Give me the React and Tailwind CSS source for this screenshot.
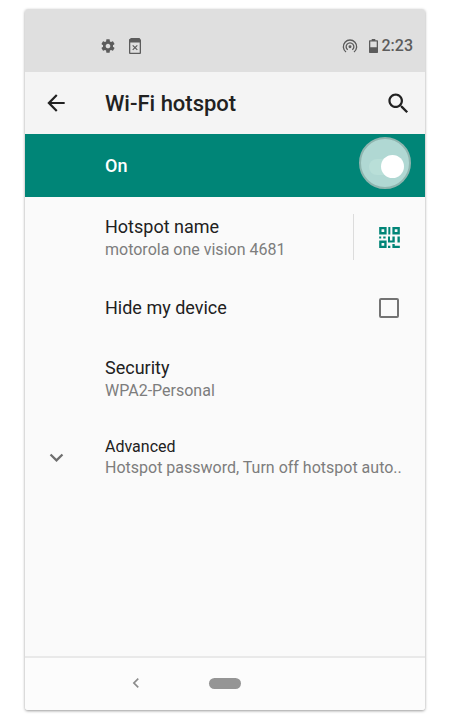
import { useState } from "react";

function MaterialIcon({ path, className }) {
  return (
    <svg viewBox="0 0 24 24" fill="currentColor" aria-hidden="true" className={className}>
      <path d={path} />
    </svg>
  );
}

const ICONS = {
  settings:
    "M19.43 12.98c.04-.32.07-.64.07-.98s-.03-.66-.07-.98l2.11-1.65c.19-.15.24-.42.12-.64l-2-3.46c-.12-.22-.39-.3-.61-.22l-2.49 1c-.52-.4-1.08-.73-1.69-.98l-.38-2.65C14.46 2.18 14.25 2 14 2h-4c-.25 0-.46.18-.49.42l-.38 2.65c-.61.25-1.17.59-1.69.98l-2.49-1c-.23-.09-.49 0-.61.22l-2 3.46c-.13.22-.07.49.12.64l2.11 1.65c-.04.32-.07.65-.07.98s.03.66.07.98l-2.11 1.65c-.19.15-.24.42-.12.64l2 3.46c.12.22.39.3.61.22l2.49-1c.52.4 1.08.73 1.69.98l.38 2.65c.03.24.24.42.49.42h4c.25 0 .46-.18.49-.42l.38-2.65c.61-.25 1.17-.59 1.69-.98l2.49 1c.23.09.49 0 .61-.22l2-3.46c.12-.22.07-.49-.12-.64l-2.11-1.65zM12 15.500c-1.930 0-3.500-1.570-3.500-3.500s1.570-3.500 3.500-3.500 3.500 1.570 3.500 3.500-1.570 3.500-3.500 3.500z",
  back: "M20 11H7.830l5.590-5.590L12 4l-8 8 8 8 1.410-1.410L7.830 13H20v-2z",
  search:
    "M15.500 14h-.79l-.28-.27C15.410 12.590 16 11.110 16 9.500 16 5.910 13.090 3 9.500 3S3 5.910 3 9.500 5.910 16 9.500 16c1.610 0 3.090-.59 4.230-1.570l.27.28v.79l5 4.990L20.490 19l-4.990-5zm-6 0C7.010 14 5 11.990 5 9.500S7.010 5 9.500 5 14 7.010 14 9.500 11.990 14 9.500 14z",
  expand: "M16.590 8.590L12 13.170 7.410 8.590 6 10l6 6 6-6z",
  chevronLeft: "M15.410 7.410L14 6l-6 6 6 6 1.410-1.410L10.830 12z",
};

function SimMissingIcon() {
  return (
    <svg viewBox="0 0 12 16" aria-hidden="true" className="h-4 w-3">
      <path
        fill="currentColor"
        fillRule="evenodd"
        d="M2 0h8.500L12 2v13a1 1 0 0 1-1 1H1a1 1 0 0 1-1-1V1.500zM1.300 4.600v10.100h9.400V4.600z"
      />
      <path d="M3.700 7.300l4.600 4.600M8.300 7.300l-4.600 4.600" stroke="currentColor" strokeWidth="1.200" />
    </svg>
  );
}

function HotspotIcon() {
  return (
    <svg viewBox="0 0 24 24" aria-hidden="true" className="h-4 w-4" fill="none" stroke="currentColor" strokeWidth="2">
      <circle cx="12" cy="13" r="2.200" fill="currentColor" stroke="none" />
      <path d="M8.600 17.700a5.800 5.800 0 1 1 6.800 0" />
      <path d="M6 21a10 10 0 1 1 12 0" />
    </svg>
  );
}

function BatteryIcon() {
  return (
    <svg viewBox="0 0 9 14" aria-hidden="true" className="h-[14px] w-[9px]">
      <path
        fill="currentColor"
        fillRule="evenodd"
        d="M2.700 0h3.600v1.200h2a.7.7 0 0 1 .7.7v11.400a.7.7 0 0 1-.7.7H.7a.7.7 0 0 1-.7-.7V1.900a.7.7 0 0 1 .7-.7h2zM1.300 2.600v5.600h6.400V2.600z"
      />
    </svg>
  );
}

function QrIcon() {
  return (
    <svg viewBox="0 0 61 62" fill="currentColor" aria-hidden="true" className="h-[21px] w-[21px]">
      <path
        fillRule="evenodd"
        d="M0 0h22v22H0zM7 7v8h8V7zM39 0h22v22H39zM46 7v8h8V7zM0 40h22v22H0zM7 47v8h8v-8z"
      />
      <path d="M27 0h6v22h-6zM0 28h6v6H0zM12 28h7v6h-7zM26 28h6v12h7v-12h7v18H26zM54 28h7v18h-7zM26 55h7v7h-7zM39 50h7v5h15v7H39z" />
    </svg>
  );
}

function SettingText({ title, detail }) {
  return (
    <span className="min-w-0 flex-1 text-left">
      <span className="block text-lg leading-6 text-[#212121]">{title}</span>
      <span className="block truncate text-base leading-[22px] text-[#7d7d7d]">{detail}</span>
    </span>
  );
}

export default function App() {
  const [on, setOn] = useState(true);
  const [hidden, setHidden] = useState(false);

  return (
    <div className="flex min-h-screen flex-col bg-white px-[25px] pt-[9px] pb-[10px] font-[Roboto,sans-serif]">
      <div className="flex flex-1 flex-col overflow-hidden rounded-[3px] bg-[#fafafa] shadow-[0_1px_3px_rgba(0,0,0,0.4)]">
        <div className="flex h-[63px] items-center justify-between bg-[#dfdfdf] pt-[10px] pr-3 pl-[75px] text-[#5c5c5c]">
          <div className="flex items-center gap-[13px]">
            <MaterialIcon path={ICONS.settings} className="h-4 w-4" />
            <SimMissingIcon />
          </div>
          <div className="flex items-center">
            <HotspotIcon />
            <span className="ml-[11px]">
              <BatteryIcon />
            </span>
            <span className="ml-1 text-base leading-5 font-medium">2:23</span>
          </div>
        </div>

        <header className="flex h-[62px] items-center bg-[#f4f4f4] text-[#212121]">
          <button type="button" aria-label="Back" className="flex w-20 shrink-0 pl-[18px]">
            <MaterialIcon path={ICONS.back} className="h-[26px] w-[26px]" />
          </button>
          <h1 className="flex-1 pt-0.5 text-[22px] leading-7 font-medium">Wi-Fi hotspot</h1>
          <button type="button" aria-label="Search" className="mr-[13px]">
            <MaterialIcon path={ICONS.search} className="h-[27px] w-[27px]" />
          </button>
        </header>

        <label className="flex h-[63px] items-center bg-[#008577] pr-[14px] pl-20 text-white">
          <span className="flex-1 text-lg leading-6 font-medium">On</span>
          <span className="relative mb-1.5 h-[52px] w-[52px] rounded-full border-2 border-[#8fb5af] bg-[#b0d8d3]">
            <input
              type="checkbox"
              role="switch"
              aria-label="Wi-Fi hotspot"
              checked={on}
              onChange={(e) => setOn(e.target.checked)}
              className="absolute top-5 left-2 m-0 h-4 w-8 appearance-none rounded-full bg-[#b9dfd8]"
            />
            <span className="pointer-events-none absolute top-4 right-[5px] h-[23px] w-[23px] rounded-full bg-white" />
          </span>
        </label>

        <main className="flex-1">
          <div className="flex h-20 items-center pl-20">
            <button type="button" className="flex min-w-0 flex-1 pt-0.5">
              <SettingText title="Hotspot name" detail="motorola one vision 4681" />
            </button>
            <div className="h-[46px] w-px bg-[#dcdcdc]" />
            <button type="button" aria-label="Share QR code" className="flex w-[71px] justify-center text-[#008577]">
              <QrIcon />
            </button>
          </div>
          <label className="flex h-[61px] items-center pr-[26px] pl-20">
            <span className="flex-1 text-lg leading-6 text-[#212121]">Hide my device</span>
            <input
              type="checkbox"
              checked={hidden}
              onChange={(e) => setHidden(e.target.checked)}
              className="m-0 h-5 w-5 appearance-none rounded-[2px] border-2 border-[#737373] checked:bg-[#008577]"
            />
          </label>
          <button type="button" className="flex h-[81px] w-full items-center pl-20">
            <SettingText title="Security" detail="WPA2-Personal" />
          </button>
          <button type="button" className="flex h-[76px] w-full items-center pr-6">
            <span className="flex w-20 shrink-0 pl-[18px] text-[#6e6e6e]">
              <MaterialIcon path={ICONS.expand} className="h-[27px] w-[27px]" />
            </span>
            <span className="min-w-0 flex-1 text-left text-base leading-[21px]">
              <span className="block text-[#212121]">Advanced</span>
              <span className="block whitespace-nowrap text-[#7d7d7d]">Hotspot password, Turn off hotspot auto..</span>
            </span>
          </button>
        </main>

        <nav className="grid h-[54px] grid-cols-[1fr_auto_1fr] items-center border-t-2 border-[#e9e9e9] bg-[#fcfcfc] pb-0.5">
          <button type="button" aria-label="Back" className="mr-[63px] justify-self-end text-[#8c8c8c]">
            <MaterialIcon path={ICONS.chevronLeft} className="h-5 w-5" />
          </button>
          <button type="button" aria-label="Home" className="h-[11px] w-8 rounded-full bg-[#959595]" />
        </nav>
      </div>
    </div>
  );
}
